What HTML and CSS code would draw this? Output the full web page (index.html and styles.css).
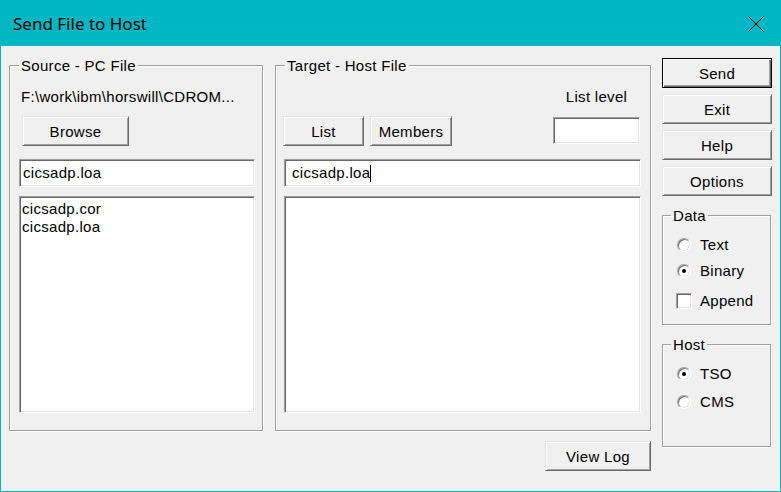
FILE: index.html
```html
<!DOCTYPE html>
<html lang="en">
<head>
  <meta charset="UTF-8" />
  <title>Send File to Host</title>
  <link rel="stylesheet" href="styles.css">
</head>
<body>
  <div class="window">
    <div class="titlebar">
      <span class="title">Send File to Host</span>
      <svg class="close" width="16" height="16" viewBox="0 0 16 16">
        <path d="M0.5 0.5 L15.5 15.5 M15.5 0.5 L0.5 15.5" stroke="#000" stroke-width="1" fill="none" />
      </svg>
    </div>

    <div class="client">
      <div class="main">
        <div class="groups">
          <fieldset class="group source">
            <legend>Source - PC File</legend>
            <div class="group-body">
              <div class="path">F:\work\ibm\horswill\CDROM...</div>
              <button class="btn browse">Browse</button>
              <div class="edit">cicsadp.loa</div>
              <div class="listbox">
                <div>cicsadp.cor</div>
                <div>cicsadp.loa</div>
              </div>
            </div>
          </fieldset>

          <fieldset class="group target">
            <legend>Target - Host File</legend>
            <div class="group-body">
              <div class="target-top">
                <div class="btn-row">
                  <button class="btn list">List</button>
                  <button class="btn members">Members</button>
                </div>
                <div class="level">
                  <span>List level</span>
                  <div class="edit level-edit"></div>
                </div>
              </div>
              <div class="edit host-edit">cicsadp.loa<span class="caret"></span></div>
              <div class="listbox"></div>
            </div>
          </fieldset>
        </div>

        <div class="log-row">
          <button class="btn log">View Log</button>
        </div>
      </div>

      <div class="side">
        <button class="btn side-btn default">Send</button>
        <button class="btn side-btn">Exit</button>
        <button class="btn side-btn">Help</button>
        <button class="btn side-btn">Options</button>

        <fieldset class="group small data">
          <legend>Data</legend>
          <div class="opts">
            <div class="opt first"><span class="radio"></span>Text</div>
            <div class="opt binary"><span class="radio on"></span>Binary</div>
            <div class="opt append"><span class="check"></span>Append</div>
          </div>
        </fieldset>

        <fieldset class="group small host">
          <legend>Host</legend>
          <div class="opts">
            <div class="opt first"><span class="radio on"></span>TSO</div>
            <div class="opt cms"><span class="radio"></span>CMS</div>
          </div>
        </fieldset>
      </div>
    </div>
  </div>
</body>
</html>
```

FILE: styles.css
```css
*, *::before, *::after {
  box-sizing: border-box;
}

body {
  margin: 0;
  font-family: 'Liberation Sans', Arial, sans-serif;
  font-size: 15px;
  line-height: 17px;
  letter-spacing: 0.3px;
  color: #000;
  background: #f0f0f0;
}

.window {
  width: 781px;
  height: 492px;
  display: flex;
  flex-direction: column;
}

/* Barra de título */
.titlebar {
  height: 46px;
  background: #00b7c3;
  display: flex;
  align-items: center;
  justify-content: space-between;
  padding: 1px 17px 0 13px;
}

.title {
  font-family: 'Noto Sans', sans-serif;
  font-size: 17px;
  letter-spacing: 0;
}

.close {
  display: block;
}

.client {
  flex: 1;
  display: flex;
  gap: 11px;
  padding: 11px 8px 0 8px;
  border: 1px solid #00b7c3;
  border-top: none;
}

.main {
  width: 642px;
  display: flex;
  flex-direction: column;
}

.groups {
  display: flex;
  gap: 12px;
  height: 374px;
}

/* Grupos (etched) */
.group {
  margin: 0;
  padding: 0;
  min-width: 0;
  border: 1px solid #a0a0a0;
  box-shadow: inset 1px 1px #fff, 1px 1px #fff;
  display: flex;
  flex-direction: column;
}

.group legend {
  margin-left: 9px;
  padding: 0 2px;
  line-height: 17px;
}

.group.small legend {
  margin-left: 8px;
}

.source {
  width: 254px;
}

.target {
  width: 376px;
}

.group-body {
  flex: 1;
  display: flex;
  flex-direction: column;
  align-items: flex-start;
  padding: 14px 7px 17px 9px;
}

.target .group-body {
  padding: 14px 9px 17px 8px;
}

.path {
  margin-left: 2px;
}

/* Botões */
.btn {
  font: inherit;
  letter-spacing: inherit;
  color: #000;
  background: #f0f0f0;
  padding: 0;
  height: 30px;
  border: 1px solid;
  border-color: #e3e3e3 #696969 #696969 #e3e3e3;
  box-shadow: inset 1px 1px #fff, inset -1px -1px #a0a0a0;
}

.btn.default {
  border-color: #000;
  box-shadow: inset 1px 1px #fff, inset -1px -1px #696969, inset -2px -2px #a0a0a0;
}

.browse {
  width: 107px;
  margin: 11px 0 0 3px;
}

.list {
  width: 81px;
}

.members {
  width: 82px;
}

.log {
  width: 106px;
}

/* Campos */
.edit {
  background: #fff;
  height: 28px;
  border: 1px solid;
  border-color: #a0a0a0 #fff #fff #a0a0a0;
  box-shadow: inset 1px 1px #696969, inset -1px -1px #e3e3e3;
  padding: 2px 0 0 3px;
  line-height: 22px;
  white-space: nowrap;
}

.group-body > .edit {
  width: 100%;
  margin-top: 13px;
}

.host-edit {
  padding-left: 7px;
}

.caret {
  display: inline-block;
  width: 1px;
  height: 17px;
  background: #000;
  vertical-align: -4px;
}

.listbox {
  width: 100%;
  flex: 1;
  margin-top: 9px;
  background: #fff;
  border: 1px solid;
  border-color: #a0a0a0 #fff #fff #a0a0a0;
  box-shadow: inset 1px 1px #696969, inset -1px -1px #e3e3e3;
  padding: 3px 0 0 2px;
  line-height: 18px;
}

.target-top {
  width: 100%;
  display: flex;
  justify-content: space-between;
  align-items: flex-start;
}

.btn-row {
  display: flex;
  gap: 6px;
  margin: 28px 0 0 -1px;
}

.level {
  display: flex;
  flex-direction: column;
  align-items: center;
  margin-right: 1px;
}

.level-edit {
  width: 87px;
  height: 27px;
  margin-top: 12px;
}

.log-row {
  display: flex;
  justify-content: flex-end;
  margin-top: 10px;
}

/* Coluna direita */
.side {
  width: 110px;
  display: flex;
  flex-direction: column;
  gap: 6px;
}

.side-btn {
  width: 110px;
  flex: none;
}

.side-btn.default {
  margin-top: 1px;
}

.data {
  width: 109px;
  height: 118px;
  margin-top: 5px;
}

.host {
  width: 109px;
  height: 111px;
  margin-top: 5px;
}

.opts {
  padding: 12px 0 0 14px;
}

.opt {
  display: flex;
  align-items: center;
  height: 17px;
  gap: 9px;
}

.binary {
  margin-top: 9px;
}

.append {
  margin-top: 13px;
}

.cms {
  margin-top: 11px;
}

.radio {
  position: relative;
  width: 14px;
  height: 14px;
  border-radius: 50%;
  background: #fff;
  border: 1px solid;
  border-color: #a0a0a0 #fff #fff #a0a0a0;
  box-shadow: inset 1px 1px #696969, inset -1px -1px #e3e3e3;
}

.radio.on::after {
  content: '';
  position: absolute;
  left: 4px;
  top: 4px;
  width: 4px;
  height: 4px;
  border-radius: 50%;
  background: #000;
}

.check {
  width: 16px;
  height: 16px;
  margin-left: -1px;
  margin-right: -1px;
  background: #fff;
  border: 1px solid;
  border-color: #a0a0a0 #fff #fff #a0a0a0;
  box-shadow: inset 1px 1px #696969, inset -1px -1px #e3e3e3;
}
```
